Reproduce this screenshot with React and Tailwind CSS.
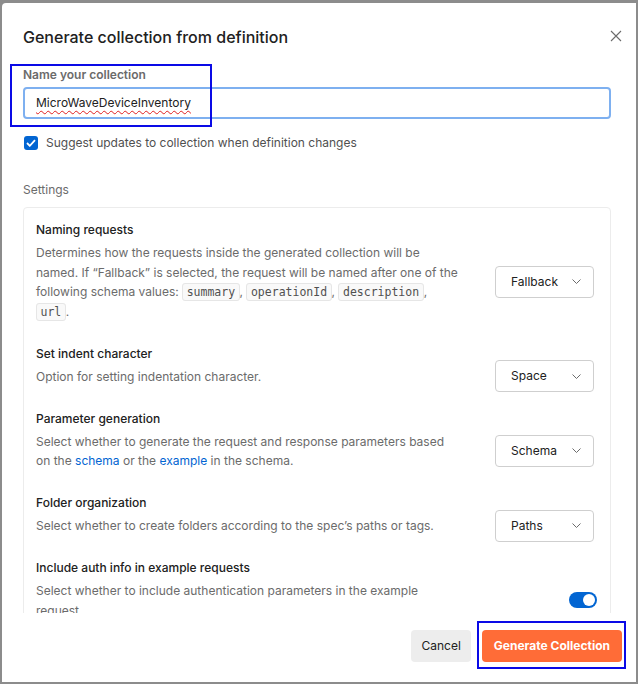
import React from 'react';

const Select = ({ value }) => (
  <div className="flex h-[32px] w-[99px] shrink-0 items-center justify-between rounded-[4px] border border-[#cfcfcf] pl-[15px] pr-[12px] text-[12px] text-[#212121]">
    <span>{value}</span>
    <svg width="9" height="5" viewBox="0 0 9 5">
      <path d="M0.5 0.5 L4.5 4.5 L8.5 0.5" fill="none" stroke="#6b6b6b" strokeWidth="1" />
    </svg>
  </div>
);

const Code = ({ children }) => (
  <code className="rounded-[3px] border border-[#e6e6e6] bg-[#f9f9f9] px-[3.5px] py-[1px] font-['DejaVu_Sans_Mono',monospace] text-[11.5px] leading-none text-[#505050]">
    {children}
  </code>
);

const Row = ({ title, children, control }) => (
  <div className="flex items-center justify-between">
    <div className="w-[424px] pb-[22.5px]">
      <div className="text-[12px] font-medium leading-5 text-[#212121]">{title}</div>
      <p className="mt-[3px] text-[12px] leading-[19.5px] text-[#6b6b6b]">{children}</p>
    </div>
    {control}
  </div>
);

const App = () => {
  return (
    <div className="relative h-[684px] w-[638px] overflow-hidden bg-[#8c8c8c] pb-[2px] pl-[2px] pr-[2px] pt-[3px] font-['Inter',sans-serif]">
      <div className="flex h-full flex-col rounded-tl-[4px] bg-white">
        <div className="flex items-start justify-between pl-[21px] pr-[14px] pt-[22px]">
          <h1 className="text-[16px] font-medium leading-6 text-[#212121]">
            Generate collection from definition
          </h1>
          <svg width="12" height="12" viewBox="0 0 12 12" className="mt-[5px]">
            <path d="M1 1 L11 11 M11 1 L1 11" stroke="#6b6b6b" strokeWidth="1.1" />
          </svg>
        </div>

        <div className="flex-1 overflow-hidden pl-[21px] pr-[25px]">
          <div className="mt-[18px] text-[12px] font-semibold leading-4 text-[#6b6b6b]">
            Name your collection
          </div>
          <div className="mt-[4px] flex h-[32px] items-center rounded-[4px] border-2 border-[#7eb0f0] pl-[11px] text-[12px] text-[#212121]">
            <span className="underline decoration-[#e02020] decoration-wavy decoration-1 underline-offset-[3px]">
              MicroWaveDeviceInventory
            </span>
          </div>

          <div className="mt-[14px] flex h-5 items-center gap-[8px] pl-[1px]">
            <span className="flex h-[14px] w-[14px] items-center justify-center rounded-[3px] bg-[#0265d2]">
              <svg width="10" height="8" viewBox="0 0 10 8">
                <path d="M1 4 L3.8 6.8 L9 1.2" fill="none" stroke="white" strokeWidth="1.8" />
              </svg>
            </span>
            <span className="text-[12px] text-[#505050]">
              Suggest updates to collection when definition changes
            </span>
          </div>

          <div className="mt-[29px] text-[12px] leading-4 text-[#6b6b6b]">Settings</div>

          <div className="mt-[9px] flex flex-col rounded-t-[4px] border border-[#ececec] pl-[12px] pr-[16px] pt-[12px]">
            <Row title="Naming requests" control={<Select value="Fallback" />}>
              Determines how the requests inside the generated collection will be named. If
              “Fallback” is selected, the request will be named after one of the following schema
              values: <Code>summary</Code>, <Code>operationId</Code>, <Code>description</Code>,{' '}
              <Code>url</Code>.
            </Row>
            <Row title="Set indent character" control={<Select value="Space" />}>
              Option for setting indentation character.
            </Row>
            <Row title="Parameter generation" control={<Select value="Schema" />}>
              Select whether to generate the request and response parameters based on the{' '}
              <span className="text-[#0265d2]">schema</span> or the{' '}
              <span className="text-[#0265d2]">example</span> in the schema.
            </Row>
            <Row title="Folder organization" control={<Select value="Paths" />}>
              Select whether to create folders according to the spec’s paths or tags.
            </Row>
            <Row
              title="Include auth info in example requests"
              control={
                <span className="mr-[-3px] flex h-[16px] w-[28px] items-center justify-end rounded-full bg-[#0265d2] px-[2px]">
                  <span className="h-[12px] w-[12px] rounded-full bg-white" />
                </span>
              }
            >
              Select whether to include authentication parameters in the example request.
            </Row>
          </div>
        </div>

        <div className="flex h-[69px] shrink-0 items-start justify-end gap-[11px] pr-[14px] pt-[17px]">
          <button className="h-[32px] rounded-[4px] bg-[#ededed] px-[10px] text-[12px] text-[#212121]">
            Cancel
          </button>
          <button className="h-[32px] rounded-[4px] bg-[#ff6c37] px-[12px] text-[12px] font-bold text-white">
            Generate Collection
          </button>
        </div>
      </div>

      <div className="pointer-events-none absolute left-[10px] top-[64px] h-[63px] w-[202px] border-2 border-[#0a0ae6]" />
      <div className="pointer-events-none absolute left-[477px] top-[621px] h-[48px] w-[149px] border-2 border-[#0a0ae6]" />
    </div>
  );
};

export default App;
